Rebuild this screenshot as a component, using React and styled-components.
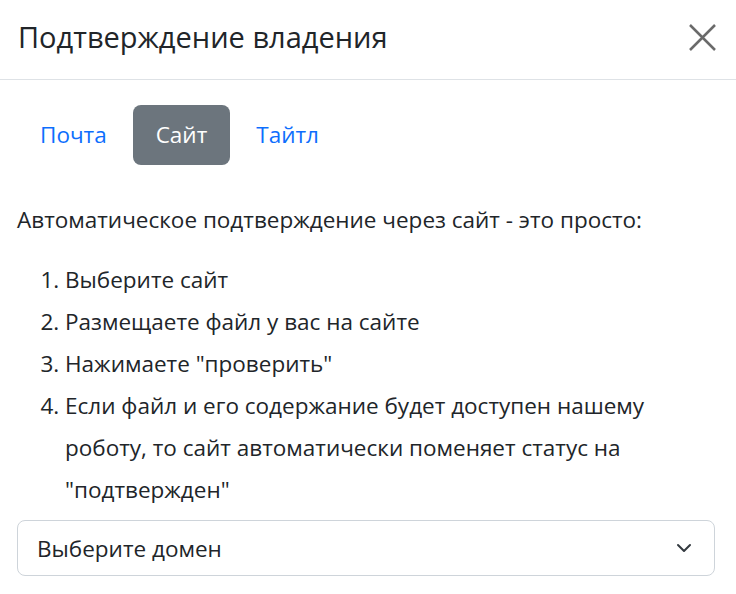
import React, { useState } from 'react'
import styled, { createGlobalStyle } from 'styled-components'

const Global = createGlobalStyle`
  body { margin: 0; background: #fff; font-family: "Open Sans", "Noto Sans", sans-serif; color: #212529; }
`

const Modal = styled.div`width: 736px; height: 594px; background: #fff; overflow: hidden;`
const Header = styled.div`display: flex; align-items: center; justify-content: space-between; height: 80px; box-sizing: border-box; padding: 0 19px 4px 18px; border-bottom: 1px solid #dee2e6;`
const Title = styled.h5`margin: 0; font-size: 29px; font-weight: 500; line-height: 1.2;`
const Close = styled.button`display: flex; border: none; background: none; padding: 0; cursor: pointer; opacity: 0.58;`
const Body = styled.div`padding: 25px 21px 0 17px;`
const Tabs = styled.div`display: flex; gap: 3px; margin-bottom: 34px;`
const Tab = styled.button`
  border: none; border-radius: 8px; font: inherit; font-size: 22.5px; line-height: 34px;
  padding: 13px 23px; cursor: pointer;
  background: ${p => (p.active ? '#6c757d' : 'transparent')};
  color: ${p => (p.active ? '#fff' : '#0d6efd')};
`
const Lead = styled.p`margin: 0 0 18px; font-size: 22.5px; line-height: 42px;`
const Steps = styled.ol`margin: 0 0 9px; padding-left: 48px; font-size: 22.5px; line-height: 42px;`
const Select = styled.div`
  display: flex; align-items: center; justify-content: space-between; height: 56px; box-sizing: border-box;
  border: 1px solid #ced4da; border-radius: 8px; padding: 0 22px 0 19px; font-size: 22.5px;
`

const App = () => {
    const [tab, setTab] = useState('site')
    return (
        <Modal>
            <Global />
            <Header>
                <Title>Подтверждение владения</Title>
                <Close aria-label="Закрыть">
                    <svg width="29" height="29" viewBox="0 0 29 29">
                        <path d="M2 2 L27 27 M27 2 L2 27" stroke="#000" strokeWidth="2.5" fill="none" />
                    </svg>
                </Close>
            </Header>
            <Body>
                <Tabs>
                    <Tab active={tab === 'mail'} onClick={() => setTab('mail')}>Почта</Tab>
                    <Tab active={tab === 'site'} onClick={() => setTab('site')}>Сайт</Tab>
                    <Tab active={tab === 'title'} onClick={() => setTab('title')}>Тайтл</Tab>
                </Tabs>
                <Lead>Автоматическое подтверждение через сайт - это просто:</Lead>
                <Steps>
                    <li>Выберите сайт</li>
                    <li>Размещаете файл у вас на сайте</li>
                    <li>Нажимаете "проверить"</li>
                    <li>Если файл и его содержание будет доступен нашему роботу, то сайт автоматически поменяет статус на "подтвержден"</li>
                </Steps>
                <Select>
                    <span>Выберите домен</span>
                    <svg width="16" height="16" viewBox="0 0 16 16">
                        <path d="M2 5 L8 11 L14 5" stroke="#343a40" strokeWidth="2" fill="none" strokeLinecap="round" strokeLinejoin="round" />
                    </svg>
                </Select>
            </Body>
        </Modal>
    )
}
export default App
